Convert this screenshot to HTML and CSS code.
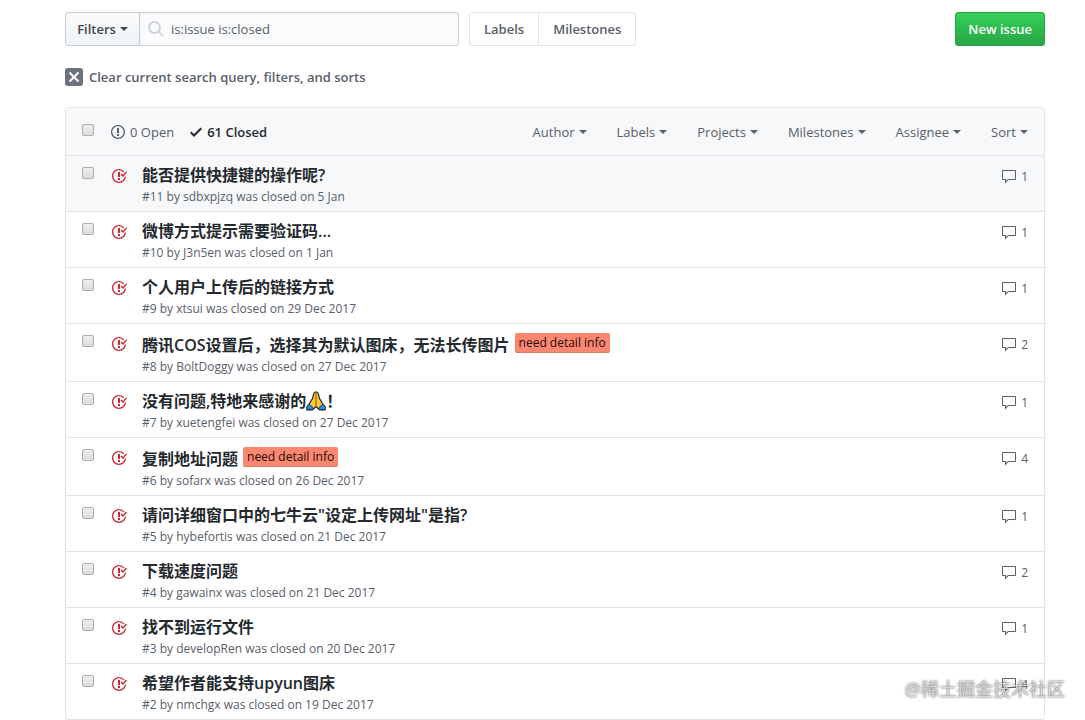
FILE: index.html
```html
<!DOCTYPE html>
<html lang="en">
<head>
<meta charset="utf-8">
<meta name="viewport" content="width=device-width, initial-scale=1">
<title>Issues</title>
<link rel="stylesheet" href="styles.css">
</head>
<body>
<svg class="sprite" aria-hidden="true">
  <symbol id="closed" viewBox="0 0 16 16"><path d="M7 10h2v2H7v-2zm2-6H7v5h2V4zm1.5 1.5l-1 1L12 9l4-4.5-1-1L12 7l-1.5-1.5zM8 13.7A5.71 5.71 0 0 1 2.3 8c0-3.14 2.56-5.7 5.7-5.7 1.83 0 3.45.88 4.5 2.2l.92-.92A6.947 6.947 0 0 0 8 1C4.14 1 1 4.14 1 8s3.14 7 7 7 7-3.14 7-7l-1.52 1.52c-.66 2.41-2.86 4.19-5.48 4.19v-.01z"/></symbol>
  <symbol id="comment" viewBox="0 0 16 16"><path d="M14 1H2c-.55 0-1 .45-1 1v8c0 .55.45 1 1 1h2v3.500L7.500 11H14c.55 0 1-.45 1-1V2c0-.55-.45-1-1-1zm0 9H7l-2 2v-2H2V2h12v8z"/></symbol>
</svg>
<main class="page">
  <div class="toolbar">
    <form class="search" role="search">
      <button class="filters" type="button">Filters<span class="caret"></span></button>
      <label class="search-box">
        <svg class="search-icon" viewBox="0 0 16 16" aria-hidden="true"><circle cx="6.500" cy="6.500" r="5.500"/><path d="M10.500 10.500L15 15"/></svg>
        <input class="search-input" type="text" value="is:issue is:closed" aria-label="Search all issues">
      </label>
    </form>
    <nav class="subnav">
      <a class="subnav-item" href="#labels">Labels</a>
      <a class="subnav-item" href="#milestones">Milestones</a>
    </nav>
    <button class="new-issue" type="button">New issue</button>
  </div>

  <a class="clear" href="#clear">
    <span class="clear-icon"><svg width="12" height="16" viewBox="0 0 12 16" aria-hidden="true"><path d="M7.480 8l3.750 3.750-1.480 1.480L6 9.480l-3.750 3.750-1.480-1.480L4.520 8 .77 4.250l1.480-1.480L6 6.520l3.750-3.750 1.480 1.480L7.480 8z"/></svg></span>
    Clear current search query, filters, and sorts
  </a>

  <section class="issues">
    <header class="issues-head">
      <input class="check" type="checkbox" aria-label="Select all issues">
      <div class="states">
        <a class="state" href="#open"><svg width="14" height="16" viewBox="0 0 14 16" aria-hidden="true"><path d="M7 2.300c3.140 0 5.700 2.560 5.700 5.700s-2.560 5.700-5.700 5.700A5.710 5.710 0 0 1 1.300 8c0-3.140 2.560-5.700 5.700-5.700zM7 1C3.140 1 0 4.140 0 8s3.140 7 7 7 7-3.140 7-7-3.140-7-7-7zm1 3H6v5h2V4zm0 6H6v2h2v-2z"/></svg>0 Open</a>
        <a class="state state-on" href="#closed-issues"><svg width="12" height="16" viewBox="0 0 12 16" aria-hidden="true"><path d="M12 5l-8 8-4-4 1.500-1.500L4 10l6.500-6.500L12 5z"/></svg>61 Closed</a>
      </div>
      <div class="menus">
        <button class="menu" type="button">Author<span class="caret"></span></button>
        <button class="menu" type="button">Labels<span class="caret"></span></button>
        <button class="menu" type="button">Projects<span class="caret"></span></button>
        <button class="menu" type="button">Milestones<span class="caret"></span></button>
        <button class="menu" type="button">Assignee<span class="caret"></span></button>
        <button class="menu" type="button">Sort<span class="caret"></span></button>
      </div>
    </header>
    <ul class="list">
      <li class="issue issue-active">
        <input class="check" type="checkbox" aria-label="Select issue 11">
        <svg class="issue-icon"><use href="#closed"/></svg>
        <div class="issue-body">
          <div class="issue-title"><a href="#11">能否提供快捷键的操作呢?</a></div>
          <p class="meta">#11 by sdbxpjzq was closed on 5 Jan</p>
        </div>
        <a class="comments" href="#11"><svg><use href="#comment"/></svg>1</a>
      </li>
      <li class="issue">
        <input class="check" type="checkbox" aria-label="Select issue 10">
        <svg class="issue-icon"><use href="#closed"/></svg>
        <div class="issue-body">
          <div class="issue-title"><a href="#10">微博方式提示需要验证码...</a></div>
          <p class="meta">#10 by J3n5en was closed on 1 Jan</p>
        </div>
        <a class="comments" href="#10"><svg><use href="#comment"/></svg>1</a>
      </li>
      <li class="issue">
        <input class="check" type="checkbox" aria-label="Select issue 9">
        <svg class="issue-icon"><use href="#closed"/></svg>
        <div class="issue-body">
          <div class="issue-title"><a href="#9">个人用户上传后的链接方式</a></div>
          <p class="meta">#9 by xtsui was closed on 29 Dec 2017</p>
        </div>
        <a class="comments" href="#9"><svg><use href="#comment"/></svg>1</a>
      </li>
      <li class="issue">
        <input class="check" type="checkbox" aria-label="Select issue 8">
        <svg class="issue-icon"><use href="#closed"/></svg>
        <div class="issue-body">
          <div class="issue-title labelled"><a href="#8">腾讯COS设置后，选择其为默认图床，无法长传图片</a><a class="tag" href="#need-detail-info">need detail info</a></div>
          <p class="meta">#8 by BoltDoggy was closed on 27 Dec 2017</p>
        </div>
        <a class="comments" href="#8"><svg><use href="#comment"/></svg>2</a>
      </li>
      <li class="issue">
        <input class="check" type="checkbox" aria-label="Select issue 7">
        <svg class="issue-icon"><use href="#closed"/></svg>
        <div class="issue-body">
          <div class="issue-title"><a href="#7">没有问题,特地来感谢的<svg class="emoji" viewBox="0 0 20 20" role="img" aria-label="folded hands"><path d="M9.500 1C7.500 1 7.300 4 6.800 7L3.500 12.500 1 16v3h5.500L10 15.500l3.500 3.500H19v-3l-2.500-3.500L13.200 7c-.5-3-.7-6-2.700-6z" fill="#ffc83d" stroke="#1f1f1f" stroke-width="1.2"/><path d="M10 2v13" stroke="#7a5200"/><path d="M1 18.500v-3l2-2.500 4.500 4-1.500 1.500H1zM19 18.500v-3L17 13l-4.500 4 1.500 1.500h5z" fill="#2d8fe0" stroke="#173a5e"/></svg>！</a></div>
          <p class="meta">#7 by xuetengfei was closed on 27 Dec 2017</p>
        </div>
        <a class="comments" href="#7"><svg><use href="#comment"/></svg>1</a>
      </li>
      <li class="issue">
        <input class="check" type="checkbox" aria-label="Select issue 6">
        <svg class="issue-icon"><use href="#closed"/></svg>
        <div class="issue-body">
          <div class="issue-title labelled"><a href="#6">复制地址问题</a><a class="tag" href="#need-detail-info">need detail info</a></div>
          <p class="meta">#6 by sofarx was closed on 26 Dec 2017</p>
        </div>
        <a class="comments" href="#6"><svg><use href="#comment"/></svg>4</a>
      </li>
      <li class="issue">
        <input class="check" type="checkbox" aria-label="Select issue 5">
        <svg class="issue-icon"><use href="#closed"/></svg>
        <div class="issue-body">
          <div class="issue-title"><a href="#5">请问详细窗口中的七牛云"设定上传网址"是指?</a></div>
          <p class="meta">#5 by hybefortis was closed on 21 Dec 2017</p>
        </div>
        <a class="comments" href="#5"><svg><use href="#comment"/></svg>1</a>
      </li>
      <li class="issue">
        <input class="check" type="checkbox" aria-label="Select issue 4">
        <svg class="issue-icon"><use href="#closed"/></svg>
        <div class="issue-body">
          <div class="issue-title"><a href="#4">下载速度问题</a></div>
          <p class="meta">#4 by gawainx was closed on 21 Dec 2017</p>
        </div>
        <a class="comments" href="#4"><svg><use href="#comment"/></svg>2</a>
      </li>
      <li class="issue">
        <input class="check" type="checkbox" aria-label="Select issue 3">
        <svg class="issue-icon"><use href="#closed"/></svg>
        <div class="issue-body">
          <div class="issue-title"><a href="#3">找不到运行文件</a></div>
          <p class="meta">#3 by developRen was closed on 20 Dec 2017</p>
        </div>
        <a class="comments" href="#3"><svg><use href="#comment"/></svg>1</a>
      </li>
      <li class="issue">
        <input class="check" type="checkbox" aria-label="Select issue 2">
        <svg class="issue-icon"><use href="#closed"/></svg>
        <div class="issue-body">
          <div class="issue-title"><a href="#2">希望作者能支持upyun图床</a></div>
          <p class="meta">#2 by nmchgx was closed on 19 Dec 2017</p>
        </div>
        <a class="comments" href="#2"><svg><use href="#comment"/></svg>4</a>
      </li>
    </ul>
  </section>
</main>
<div class="watermark">@稀土掘金技术社区</div>
</body>
</html>
```
FILE: styles.css
```css
* { box-sizing: border-box; }

body {
  margin: 0;
  position: relative;
  background: #fff;
  color: #24292e;
  font: 13px/20px "Open Sans", "Noto Sans CJK SC", sans-serif;
}

a { color: inherit; text-decoration: none; }
svg { fill: currentColor; flex: none; }
button { font: inherit; color: inherit; cursor: pointer; }
.sprite { display: none; }

.page { padding: 12px 40px 0 65px; }

.toolbar { display: flex; align-items: center; gap: 10px; height: 34px; }

.search { display: flex; flex: 0 1 394px; height: 34px; margin: 0; }
.filters {
  display: flex;
  align-items: center;
  justify-content: center;
  flex: none;
  width: 75px;
  padding: 0;
  border: 1px solid #c8ccd1;
  border-radius: 3px 0 0 3px;
  background: linear-gradient(#fafbfc, #eff3f6);
  color: #3f464e;
  font-weight: 600;
}
.caret {
  margin-left: 4px;
  border: 4px solid transparent;
  border-top-color: currentColor;
  border-bottom: 0;
}
.search-box {
  display: flex;
  align-items: center;
  gap: 7px;
  flex: 1;
  min-width: 0;
  padding: 0 8px;
  border: 1px solid #d1d5da;
  border-left: 0;
  border-radius: 0 3px 3px 0;
  background: #fafbfc;
  box-shadow: inset 0 1px 2px rgba(27, 31, 35, 0.08);
}
.search-icon { width: 16px; height: 16px; fill: none; stroke: #c6cbd1; stroke-width: 1.5; }
.search-input {
  flex: 1;
  min-width: 0;
  padding: 0;
  border: 0;
  outline: 0;
  background: transparent;
  color: #586069;
  font: inherit;
}

.subnav { display: flex; border: 1px solid #e1e4e8; border-radius: 3px; color: #586069; font-weight: 600; }
.subnav-item { padding: 6px 14px; }
.subnav-item + .subnav-item { border-left: 1px solid #e1e4e8; }

.new-issue {
  height: 34px;
  margin-left: auto;
  padding: 0 12px;
  border: 1px solid #279f43;
  border-radius: 3px;
  background: linear-gradient(#34d058, #28a745);
  color: #fff;
  font-weight: 600;
}

.clear { display: flex; align-items: center; gap: 6px; margin: 21px 0 20px; color: #586069; font-weight: 600; }
.clear-icon {
  display: grid;
  place-items: center;
  width: 18px;
  height: 18px;
  border-radius: 3px;
  background: #6a737d;
  color: #fff;
}

.issues { border: 1px solid #e1e4e8; border-radius: 3px; }
.issues-head { display: flex; align-items: center; height: 47px; padding: 0 16px; background: #f6f8fa; color: #586069; }
.check {
  appearance: none;
  flex: none;
  width: 12px;
  height: 12px;
  margin: 0;
  border: 1px solid #adadad;
  border-radius: 2px;
  background: linear-gradient(#eee, #dcdcdc);
}
.issues-head .check { margin-bottom: 4px; }
.states { display: flex; gap: 16px; margin-left: 17px; }
.state { display: flex; align-items: center; gap: 5px; }
.state-on { color: #24292e; font-weight: 600; }
.menus { display: flex; gap: 30px; margin-left: auto; }
.menu { display: flex; align-items: center; padding: 0; border: 0; background: none; }

.list { margin: 0; padding: 0; list-style: none; }
.issue { display: flex; align-items: flex-start; padding: 8px 16px 4px; border-top: 1px solid #e1e4e8; }
.issue-active { background: #f6f8fa; }
.issue .check { margin-top: 3px; }
.issue-icon { width: 16px; height: 16px; margin: 4px 15px 0 17px; color: #cb2431; }
.issue-body { flex: 1; min-width: 0; }
.issue-title { display: flex; gap: 5px; height: 23px; font-size: 16px; font-weight: 600; line-height: 22px; }
.labelled { height: 25px; line-height: 26px; }
.emoji { width: 20px; height: 20px; vertical-align: -4px; }
.tag {
  align-self: flex-start;
  margin-top: 1px;
  padding: 0 4px;
  border-radius: 2px;
  background: #fb8770;
  box-shadow: inset 0 -1px 0 rgba(27, 31, 35, 0.12);
  color: #1c0c09;
  font-size: 12px;
  font-weight: 500;
  line-height: 20px;
}
.meta { margin: 0; color: #586069; font-size: 12px; line-height: 20px; }
.comments { display: flex; align-items: center; gap: 4px; margin-top: 3px; color: #586069; font-size: 12px; }
.comments svg { width: 16px; height: 16px; }

.watermark {
  position: absolute;
  right: 20px;
  bottom: 18px;
  color: rgba(255, 255, 255, 0.7);
  font-size: 18px;
  line-height: 26px;
  text-shadow: 0 0 2px #333;
}
```
